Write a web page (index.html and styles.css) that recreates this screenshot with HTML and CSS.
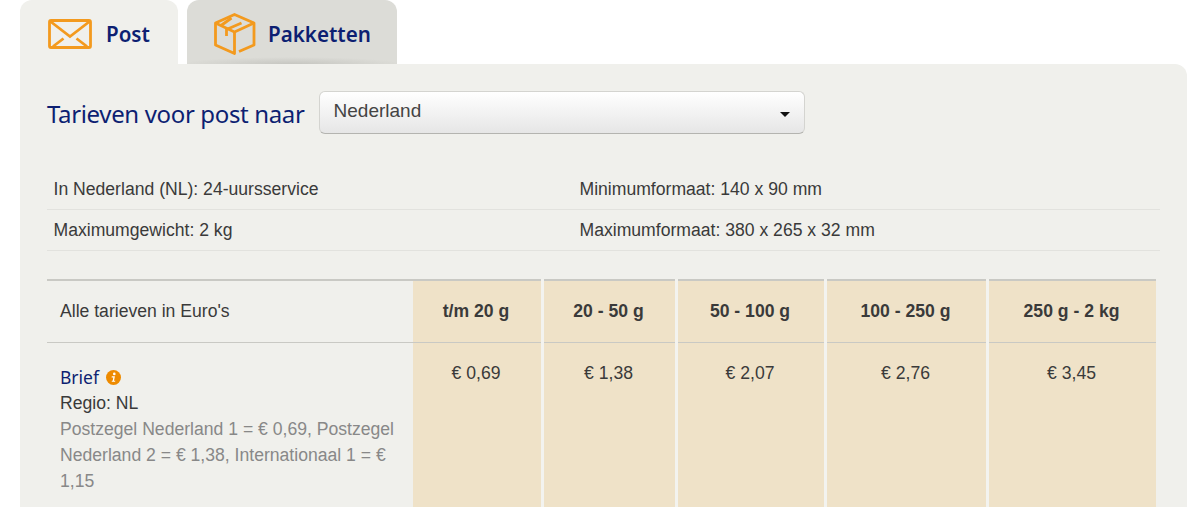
FILE: index.html
```html
<!DOCTYPE html>
<html>
  <head>
    <meta charset="utf-8">
    <title>Tarieven</title>
    <link rel="stylesheet" href="styles.css">
  </head>
  <body>
    <section class="rates">
      <!-- tabs -->
      <ul class="tabs">
        <li class="tab tab-post active">
          <svg class="tab-icon" width="44" height="30" viewBox="0 0 44 30" fill="none" stroke="#f39a1e" stroke-width="2.800">
            <rect x="1.500" y="1.500" width="41" height="27" rx="1.500"/>
            <path d="M2.500 2.500 L22 17.500 L41.500 2.500"/>
            <path d="M5 27.500 L15.500 19.500 M39 27.500 L28.500 19.500"/>
          </svg>
          <span>Post</span>
        </li>
        <li class="tab tab-parcel">
          <svg class="tab-icon" width="42" height="42" viewBox="0 0 42 42" fill="none" stroke="#f39a1e" stroke-width="2.800" stroke-linejoin="round">
            <path d="M25 38.500 L40 32 V10 L20.500 1.500 L1.500 10 V32 L20.500 40.500 V19"/>
            <path d="M1.500 10 L20.500 19 L40 10"/>
            <path d="M27.500 10 L12.500 16.500 V23"/>
            <path d="M17.500 5 L7 12.500"/>
          </svg>
          <span>Pakketten</span>
        </li>
      </ul>

      <div class="panel">
        <form class="country">
          <h2>Tarieven voor post naar</h2>
          <div class="select">
            <span>Nederland</span>
            <i class="caret"></i>
          </div>
        </form>

        <dl class="facts">
          <div class="fact"><dt>In Nederland (NL): 24-uursservice</dt><dd>Minimumformaat: 140 x 90 mm</dd></div>
          <div class="fact"><dt>Maximumgewicht: 2 kg</dt><dd>Maximumformaat: 380 x 265 x 32 mm</dd></div>
        </dl>

        <table class="prices">
          <colgroup>
            <col class="col-name">
            <col class="col-1">
            <col class="col-2">
            <col class="col-3">
            <col class="col-4">
            <col class="col-5">
          </colgroup>
          <thead>
            <tr>
              <th class="label">Alle tarieven in Euro's</th>
              <th>t/m 20 g</th>
              <th>20 - 50 g</th>
              <th>50 - 100 g</th>
              <th>100 - 250 g</th>
              <th>250 g - 2 kg</th>
            </tr>
          </thead>
          <tbody>
            <tr>
              <td class="label">
                <a class="product">Brief</a>
                <svg class="info" width="15" height="15" viewBox="0 0 15 15">
                  <circle cx="7.500" cy="7.500" r="7.500" fill="#ee8b00"/>
                  <circle cx="8.300" cy="3.900" r="1.300" fill="#fff"/>
                  <path d="M5.800 6.300 H8.900 L8 10.700 H9.300 L9.100 11.800 H5.700 L5.900 10.700 H6.700 L7.300 7.400 H5.600 Z" fill="#fff"/>
                </svg>
                <div class="region">Regio: NL</div>
                <div class="note">Postzegel Nederland 1 = € 0,69, Postzegel Nederland 2 = € 1,38, Internationaal 1 = € 1,15</div>
              </td>
              <td>€ 0,69</td>
              <td>€ 1,38</td>
              <td>€ 2,07</td>
              <td>€ 2,76</td>
              <td>€ 3,45</td>
            </tr>
          </tbody>
        </table>
      </div>
    </section>
  </body>
</html>
```

FILE: styles.css
```css
html {
  background: #fff;
  color: #3a3a3a;
  font-family: "Liberation Sans", Arial, sans-serif;
  font-size: 16px;
}
body {
  margin: 0;
  height: 507px;
  overflow: hidden;
}
h2, ul, dl, dd {
  margin: 0;
  padding: 0;
}

.rates {
  width: 1167px;
  margin-left: 20px;
}

/* tabs */
.tabs {
  display: flex;
  gap: 9px;
  height: 64px;
  list-style: none;
}
.tab {
  display: flex;
  align-items: center;
  height: 64px;
  box-sizing: border-box;
  padding-top: 4px;
  padding-left: 28px;
  gap: 14px;
  border-radius: 12px 12px 0 0;
  color: #0d1f72;
  font-family: "Noto Sans", sans-serif;
  font-size: 20.600px;
  font-weight: 600;
}
.tab-post {
  width: 158px;
  background: #f0f0ec;
}
.tab-parcel {
  width: 210px;
  padding-left: 27px;
  gap: 12px;
  background: radial-gradient(ellipse 110px 7px at 50% 100%, #c6c6c1, rgba(198, 198, 193, 0)), #dcdcd7;
}

/* main panel */
.panel {
  background: #f0f0ec;
  border-radius: 0 12px 0 0;
  padding: 27px 27px 0;
  height: 443px;
  box-sizing: border-box;
  overflow: hidden;
}

.country {
  display: flex;
  align-items: center;
  gap: 14px;
  height: 43px;
}
.country h2 {
  margin-top: 2px;
  color: #0d1f72;
  font-family: "Noto Sans", sans-serif;
  font-size: 24px;
  font-weight: 400;
  letter-spacing: -0.350px;
  white-space: nowrap;
}
.select {
  display: flex;
  align-items: center;
  justify-content: space-between;
  width: 486px;
  height: 43px;
  box-sizing: border-box;
  padding: 0 14px 3px;
  border: 1px solid #d4d4d0;
  border-bottom-color: #b4b4b0;
  border-radius: 6px;
  background: linear-gradient(#fff, #e6e6e6);
  color: #444;
  font-size: 19px;
}
.caret {
  margin-top: 7px;
  border-left: 5px solid transparent;
  border-right: 5px solid transparent;
  border-top: 5px solid #111;
}

.facts {
  margin: 35px 0 0 0;
  width: 1113px;
}
.fact {
  display: flex;
  align-items: center;
  height: 40px;
  padding-left: 6.500px;
  border-bottom: 1px solid #e2e2de;
  font-size: 17.600px;
}
.fact dt {
  width: 526px;
}

/* price table */
.prices {
  width: 1109px;
  margin-top: 28px;
  border-spacing: 0;
  table-layout: fixed;
}
.col-name { width: 366px; }
.col-1 { width: 128px; }
.col-2 { width: 134px; }
.col-3 { width: 149px; }
.col-4 { width: 162px; }
.col-5 { width: 170px; }

.prices th, .prices td {
  background: #efe2c8;
  background-clip: padding-box;
  border-left: 3px solid #f3f3ef;
  text-align: center;
  font-size: 17.600px;
}
.prices th {
  height: 64px;
  padding: 0 2px 0 0;
  box-shadow: inset 0 2px #c9c9c4, inset 0 -1px #c9c9c4;
  font-weight: bold;
}
.prices td {
  height: 144px;
  padding: 20px 2px 0 0;
  vertical-align: top;
}
.prices .label {
  background: none;
  border-left: 0;
  padding-left: 13px;
  padding-right: 14px;
  text-align: left;
  font-weight: normal;
}
.prices .label + th, .prices .label + td {
  border-left: 0;
}
.prices td.label {
  padding-top: 22px;
}
.product {
  color: #0d1f72;
  font-family: "Noto Sans", sans-serif;
  font-size: 17.500px;
}
.info {
  vertical-align: -1px;
  margin-left: 2px;
}
.region {
  margin-top: 1px;
  line-height: 26px;
}
.note {
  line-height: 26px;
  color: #888;
}
```
